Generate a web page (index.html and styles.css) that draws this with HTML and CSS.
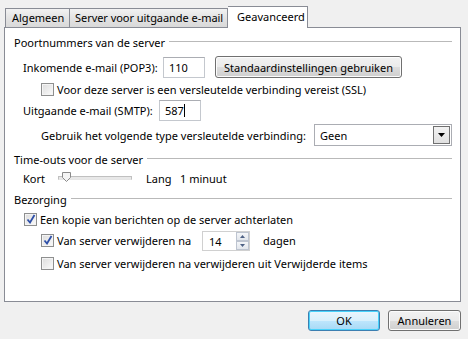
FILE: index.html
```html
<!DOCTYPE html>
<html lang="nl">
<head>
  <meta charset="UTF-8">
  <title>Meer instellingen</title>
  <link rel="stylesheet" href="styles.css">
</head>
<body>
  <div class="dialog">
    <div class="tabs">
      <div class="tab tab-general">Algemeen</div>
      <div class="tab tab-outgoing">Server voor uitgaande e-mail</div>
      <div class="tab active">Geavanceerd</div>
    </div>

    <div class="panel">
      <div class="group-title"><span>Poortnummers van de server</span></div>

      <div class="row row-pop">
        <span class="label">Inkomende e-mail (POP3):</span>
        <div class="textbox port">110</div>
        <button class="btn btn-default-settings">Standaardinstellingen gebruiken</button>
      </div>

      <div class="row row-ssl indent">
        <span class="check"></span>
        <span>Voor deze server is een versleutelde verbinding vereist (SSL)</span>
      </div>

      <div class="row row-smtp">
        <span class="label label-smtp">Uitgaande e-mail (SMTP):</span>
        <div class="textbox port">587<span class="caret"></span></div>
      </div>

      <div class="row row-enc indent">
        <span class="label-enc">Gebruik het volgende type versleutelde verbinding:</span>
        <div class="select">
          <span>Geen</span>
          <span class="select-btn">
            <svg width="7" height="4" viewBox="0 0 7 4"><path d="M0 0h7L3.5 4z" fill="#000"/></svg>
          </span>
        </div>
      </div>

      <div class="group-title title-timeout"><span>Time-outs voor de server</span></div>

      <div class="row row-timeout">
        <span class="label-kort">Kort</span>
        <div class="slider">
          <div class="track"></div>
          <svg class="thumb" width="9" height="10" viewBox="0 0 9 10">
            <path d="M0.5 0.5h8v5l-4 4l-4-4z" fill="#f4f4f4" stroke="#8a8a8a"/>
          </svg>
        </div>
        <span class="label-lang">Lang</span>
        <span>1 minuut</span>
      </div>

      <div class="group-title title-delivery"><span>Bezorging</span></div>

      <div class="row row-copy">
        <span class="check checked">
          <svg width="10" height="10" viewBox="0 0 10 10"><path d="M1.5 5.5l2.5 3l4.5-7.5" fill="none" stroke="#2d4fa8" stroke-width="1.8"/></svg>
        </span>
        <span>Een kopie van berichten op de server achterlaten</span>
      </div>

      <div class="row row-remove indent">
        <span class="check checked">
          <svg width="10" height="10" viewBox="0 0 10 10"><path d="M1.5 5.5l2.5 3l4.5-7.5" fill="none" stroke="#2d4fa8" stroke-width="1.8"/></svg>
        </span>
        <span class="label-remove">Van server verwijderen na</span>
        <div class="spin">
          <span class="spin-value">14</span>
          <span class="spin-btns">
            <span class="spin-btn"><svg width="5" height="3" viewBox="0 0 5 3"><path d="M0 3h5L2.5 0z" fill="#4d6185"/></svg></span>
            <span class="spin-btn"><svg width="5" height="3" viewBox="0 0 5 3"><path d="M0 0h5L2.5 3z" fill="#4d6185"/></svg></span>
          </span>
        </div>
        <span>dagen</span>
      </div>

      <div class="row row-deleted indent">
        <span class="check"></span>
        <span>Van server verwijderen na verwijderen uit Verwijderde items</span>
      </div>
    </div>

    <div class="footer">
      <button class="btn btn-ok">OK</button>
      <button class="btn btn-cancel">Annuleren</button>
    </div>
  </div>
</body>
</html>
```

FILE: styles.css
```css
body {
  margin: 0;
  padding: 0;
  background-color: #f0f0f0;
  font-family: 'Noto Sans', sans-serif;
  font-size: 11px;
  color: #000;
  white-space: nowrap;
}

.dialog {
  width: 468px;
  height: 339px;
  padding-top: 6px;
  box-sizing: border-box;
}

/* Tabbladen */
.tabs {
  display: flex;
  align-items: flex-end;
  padding-left: 5px;
  height: 21px;
  position: relative;
  z-index: 1;
}

.tab {
  height: 19px;
  line-height: 18px;
  padding-left: 6px;
  border: 1px solid #898c95;
  border-bottom: none;
  border-right: none;
  box-sizing: border-box;
  background: linear-gradient(#f2f2f2, #e3e3e3 50%, #d9d9d9);
  overflow: hidden;
}

.tab-general {
  width: 64px;
}

.tab-outgoing {
  width: 159px;
  padding-left: 5px;
  letter-spacing: -0.05px;
  border-right: 1px solid #898c95;
}

.tab.active {
  width: 80px;
  height: 22px;
  line-height: 19px;
  padding-left: 9px;
  background: #fff;
  margin-bottom: -1px;
  border-left: none;
  border-right: 1px solid #898c95;
}

.panel {
  margin-left: 4px;
  width: 457px;
  height: 275px;
  box-sizing: border-box;
  background: #fff;
  border: 1px solid #898c95;
  padding: 6px 8px 0 9px;
}

/* Groepstitels met lijn */
.group-title {
  display: flex;
  align-items: center;
  height: 16px;
}

.group-title::after {
  content: '';
  flex: 1;
  height: 1px;
  background: #b9b9b9;
  margin-left: 4px;
  margin-top: -1px;
}

.row {
  display: flex;
  align-items: center;
  padding-left: 9px;
}

.row.indent {
  padding-left: 27px;
}

.row-pop {
  margin-top: 6px;
  height: 22px;
}

.label {
  width: 140px;
}

.label-smtp {
  width: 136px;
}

.textbox {
  height: 21px;
  box-sizing: border-box;
  border: 1px solid #c4c8ce;
  border-top-color: #abadb3;
  background: #fff;
  line-height: 19px;
  padding-left: 5px;
}

.port {
  width: 42px;
}

.caret {
  display: inline-block;
  width: 1px;
  height: 13px;
  background: #000;
  vertical-align: -2px;
}

.btn {
  font-family: inherit;
  font-size: 11px;
  color: #000;
  height: 22px;
  padding: 0;
  border: 1px solid #707070;
  border-radius: 3px;
  background: linear-gradient(#f2f2f2, #ebebeb 50%, #dddddd 51%, #cfcfcf);
  box-shadow: inset 0 0 0 1px #fcfcfc;
}

.btn-default-settings {
  margin-left: 10px;
  width: 187px;
}

.row-ssl {
  margin-top: 3px;
  height: 16px;
}

.check {
  width: 13px;
  height: 13px;
  box-sizing: border-box;
  border: 1px solid #8e8f8f;
  background: linear-gradient(135deg, #dcdcdc, #fbfbfb);
  box-shadow: inset 0 0 0 1px #f4f4f4;
  margin-right: 3px;
  display: flex;
  align-items: center;
  justify-content: center;
  flex-shrink: 0;
}

.row-smtp {
  margin-top: 3px;
  height: 21px;
}

.row-enc {
  margin-top: 3px;
  height: 22px;
}

.label-enc {
  width: 273px;
}

.select {
  width: 138px;
  height: 22px;
  box-sizing: border-box;
  border: 1px solid #abadb3;
  background: #fff;
  display: flex;
  align-items: center;
  justify-content: space-between;
  padding-left: 5px;
}

.select-btn {
  width: 17px;
  height: 18px;
  box-sizing: border-box;
  border: 1px solid #707070;
  background: linear-gradient(#f2f2f2, #e0e0e0);
  display: flex;
  align-items: center;
  justify-content: center;
  margin-right: 1px;
}

.title-timeout {
  margin-top: 5px;
}

.row-timeout {
  margin-top: 1px;
  height: 20px;
}

.label-kort {
  width: 35px;
}

.slider {
  position: relative;
  width: 74px;
  height: 14px;
  margin-right: 14px;
}

.track {
  margin-top: 5px;
  height: 2px;
  border: 1px solid #c0c0c0;
  border-bottom-color: #e6e6e6;
  background: #e8e8e8;
}

.thumb {
  position: absolute;
  left: 4px;
  top: 1px;
}

.label-lang {
  width: 34px;
}

.title-delivery {
  margin-top: 3px;
}

.row-copy {
  margin-top: 2px;
  height: 20px;
  padding-left: 10px;
}

.row-remove {
  margin-top: 1px;
  height: 20px;
}

.label-remove {
  width: 145px;
}

.spin {
  width: 48px;
  height: 20px;
  margin-top: 2px;
  box-sizing: border-box;
  border: 1px solid #d0d0d0;
  background: #fff;
  display: flex;
  align-items: center;
  justify-content: space-between;
  padding-left: 6px;
  margin-right: 13px;
}

.spin-btns {
  display: flex;
  flex-direction: column;
  height: 18px;
  width: 13px;
}

.spin-btn {
  flex: 1;
  box-sizing: border-box;
  border: 1px solid #bdc4d0;
  background: linear-gradient(#f4f6f9, #e2e6ec);
  display: flex;
  align-items: center;
  justify-content: center;
}

.row-deleted {
  margin-top: 5px;
  height: 16px;
}

/* Knoppen onderaan */
.footer {
  display: flex;
  justify-content: flex-end;
  gap: 8px;
  padding-right: 7px;
  margin-top: 8px;
}

.footer .btn {
  height: 21px;
}

.btn-ok {
  width: 72px;
  border-color: #3c7fb1;
  background: linear-gradient(#eaf6fd, #d9f0fc 50%, #bee6fd 51%, #a7d9f5);
  box-shadow: inset 0 0 0 1px #48d2fb;
}

.btn-cancel {
  width: 73px;
}
```
